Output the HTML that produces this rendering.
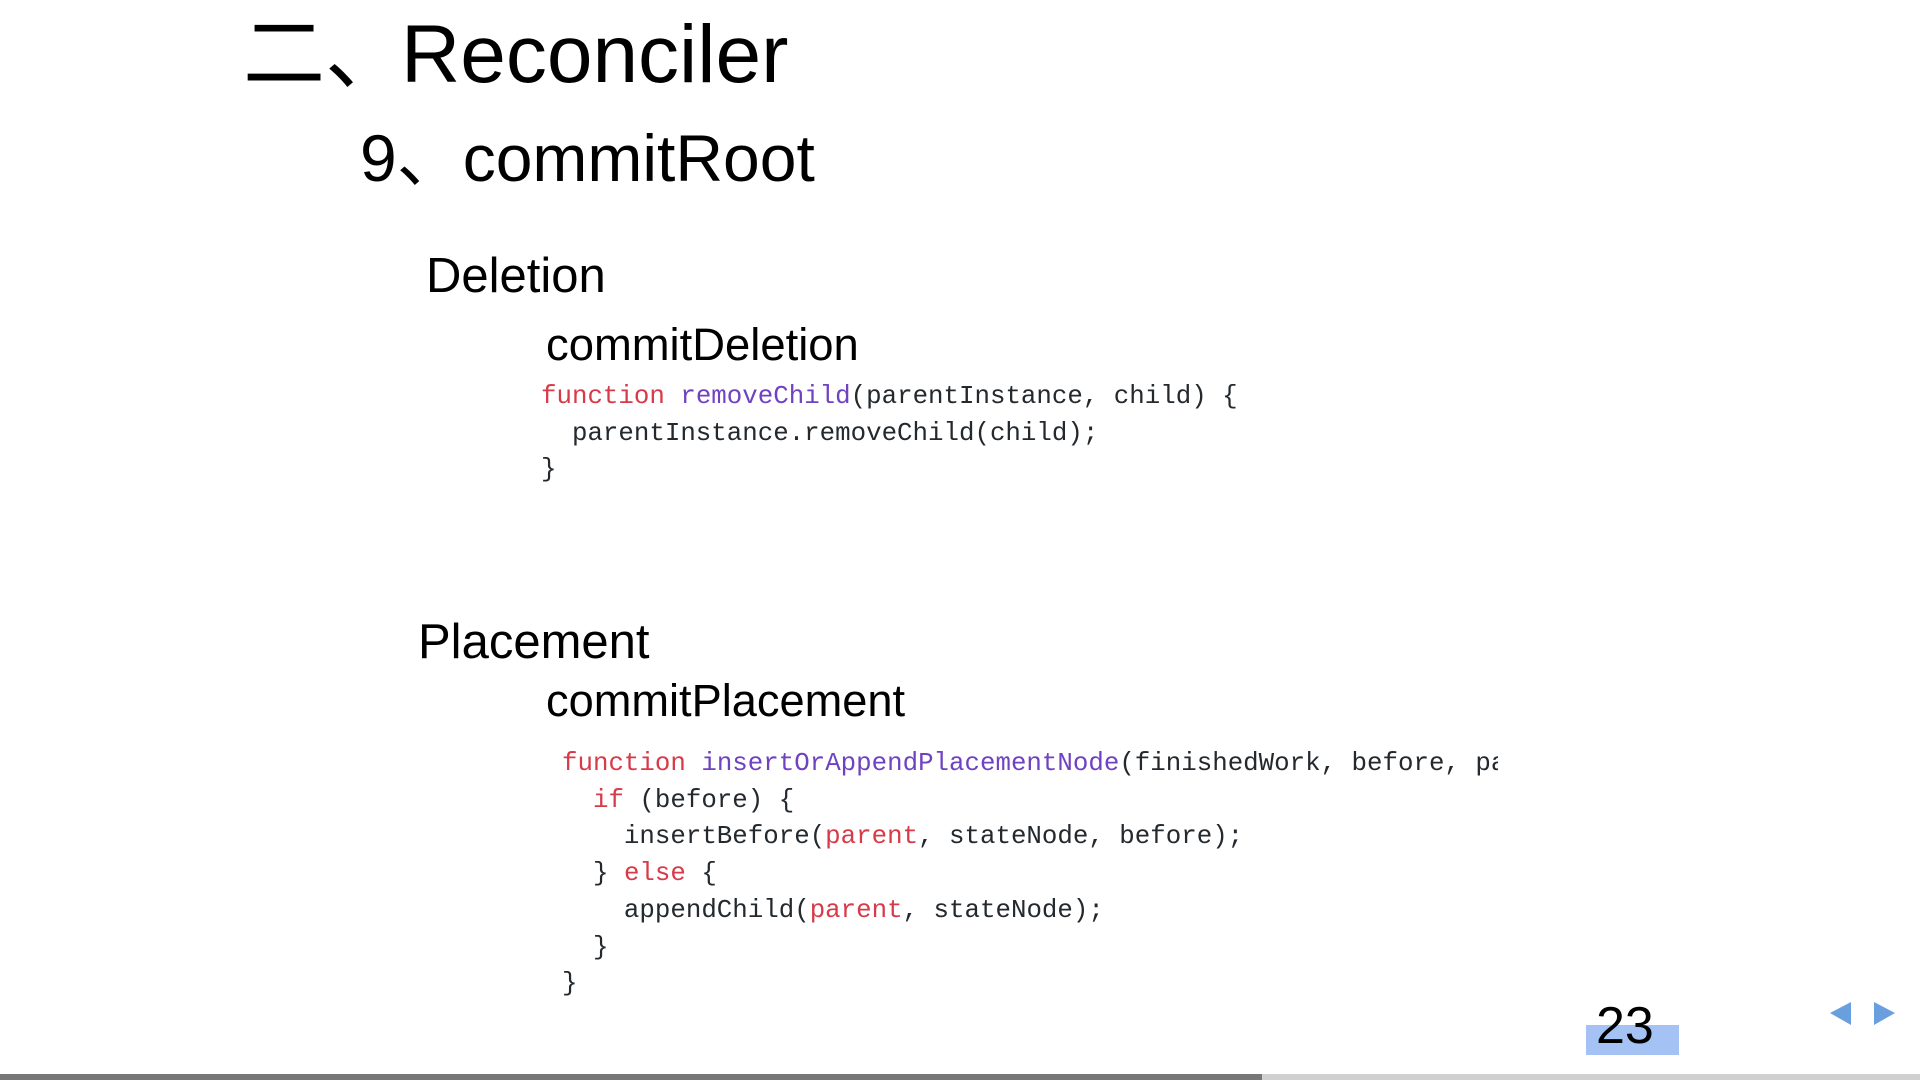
<!DOCTYPE html>
<html><head><meta charset="utf-8"><style>
html,body{margin:0;padding:0;background:#fff;}
body{width:1920px;height:1080px;position:relative;overflow:hidden;font-family:"Liberation Sans","Noto Sans CJK SC",sans-serif;color:#000;}
.t{position:absolute;white-space:nowrap;line-height:1;}
.code{position:absolute;font-family:"Liberation Mono",monospace;font-size:25.8px;line-height:36.7px;color:#24292e;white-space:pre;}
.k{color:#d73a49}.f{color:#6f42c1}
</style></head><body>
<div class="t" style="left:243px;top:14px;font-size:82px;">二、<span style="margin-left:-6px">Reconciler</span></div>
<div class="t" style="left:360px;top:125px;font-size:66px;">9、commitRoot</div>
<div class="t" style="left:426px;top:252px;font-size:49px;">Deletion</div>
<div class="t" style="left:546px;top:322px;font-size:45.4px;">commitDeletion</div>
<div class="code" style="left:541px;top:379px;"><span class="k">function</span> <span class="f">removeChild</span>(parentInstance, child) {
  parentInstance.removeChild(child);
}</div>
<div class="t" style="left:418px;top:618px;font-size:49px;">Placement</div>
<div class="t" style="left:546px;top:678px;font-size:45.2px;">commitPlacement</div>
<div class="code" style="left:562px;top:746px;width:936px;overflow:hidden;"><span class="k">function</span> <span class="f">insertOrAppendPlacementNode</span>(finishedWork, before, parent) {
  <span class="k">if</span> (before) {
    insertBefore(<span class="k">parent</span>, stateNode, before);
  } <span class="k">else</span> {
    appendChild(<span class="k">parent</span>, stateNode);
  }
}</div>
<div style="position:absolute;left:1586px;top:1025px;width:93px;height:30px;background:#a4c3f4;"></div>
<div class="t" style="left:1596px;top:1000px;font-size:52px;">23</div>
<svg style="position:absolute;left:1828px;top:1000px" width="70" height="30"><polygon points="2,13 23,2 23,25" fill="#6a9fdf"/><polygon points="46,2 67,13 46,25" fill="#6a9fdf"/></svg>
<div style="position:absolute;left:0;top:1074px;width:1920px;height:6px;background:#d0d0d0;"></div>
<div style="position:absolute;left:0;top:1074px;width:1262px;height:6px;background:#777;"></div>
</body></html>
